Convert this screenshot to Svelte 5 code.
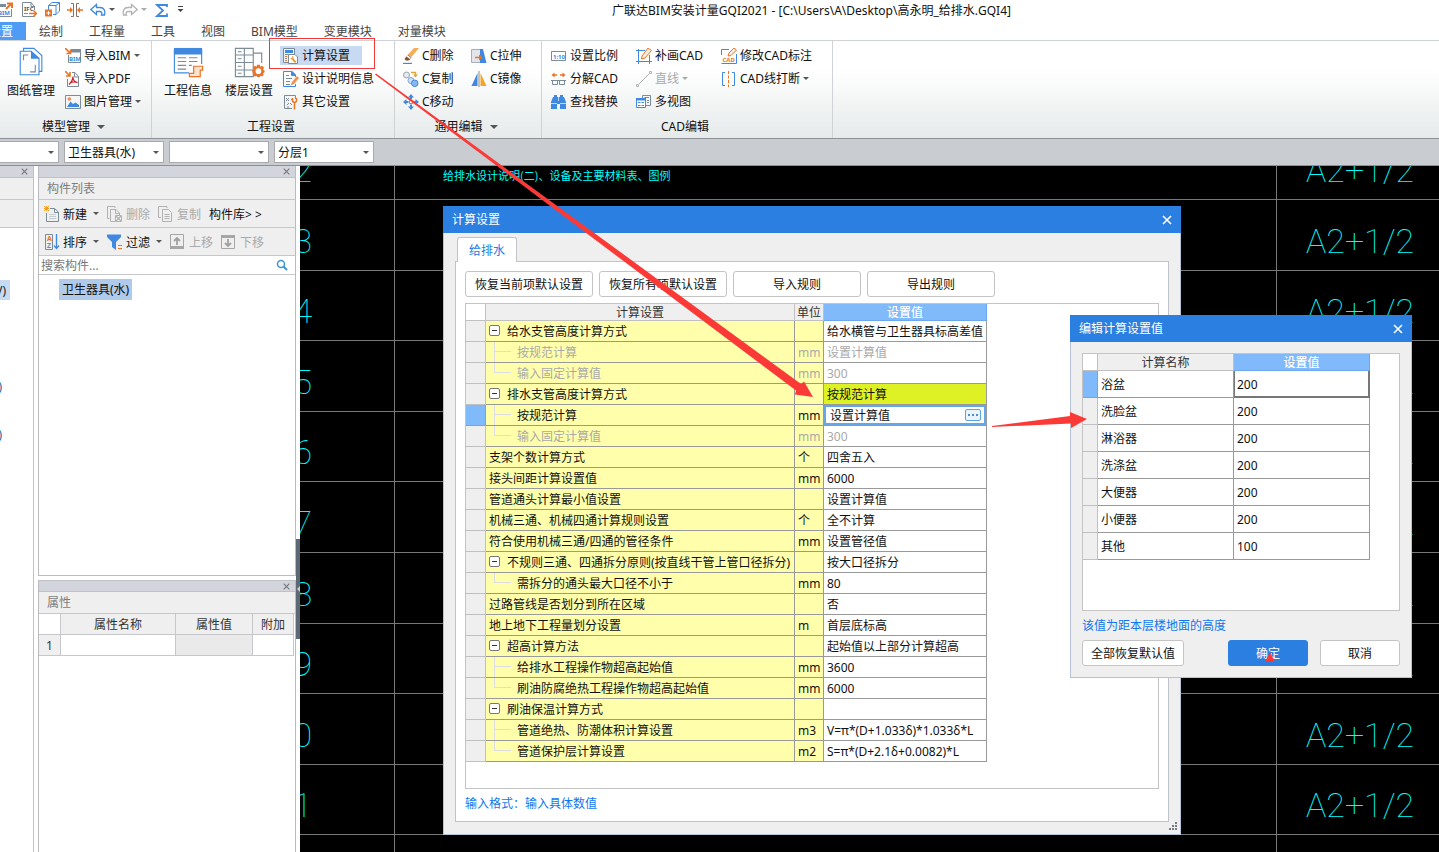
<script lang="ts">
  type Shape = { d?: string; fill?: string; stroke?: string; w?: number; text?: string; x?: number; y?: number; size?: number };

  const BLUE = '#3f8ae0';
  const GRAY = '#7b8b97';
  const ORANGE = '#ea7425';
  const MUTED = '#b2b2b2';

  // small icons live on a 16x16 grid, big ones on 32x32
  const icons: Record<string, Shape[]> = {
    exportBim: [
      { d: 'M0 4.500H8M0 15.500H13.500V8', stroke: GRAY },
      { d: 'M0 3H8V6H0Z', fill: GRAY },
      { text: 'BIM', x: 0, y: 14, size: 6, fill: BLUE },
      { d: 'M8 8L13 3M9 2.500H14V7', stroke: ORANGE, w: 2 }
    ],
    ifc: [
      { d: 'M13.500 9V5.500L10 1.500H1.500V15.500H13.500V14', stroke: GRAY },
      { d: 'M10 1V5.500H14', stroke: GRAY },
      { text: 'IFC', x: 3, y: 10, size: 6, fill: '#555' },
      { d: 'M3 12.500H7', stroke: GRAY },
      { d: 'M8 12.500H15M12.500 9.500L15.500 12.500L12.500 15.500', stroke: ORANGE, w: 1.5 }
    ],
    cube: [
      { d: 'M4.500 4.500L8 1.500H15.500V10L12 13.500M15.500 1.500L12 4.500M4.500 9V4.500H12V13.500H9', stroke: BLUE },
      { d: 'M1 8.500H8V15.500H1Z', fill: ORANGE },
      { d: 'M4.500 10V14M2.500 12H6.500', stroke: '#fff' }
    ],
    spacing: [
      { d: 'M4 2.500H6.500V15.500H4M12 2.500H9.500V15.500H12', stroke: '#8d6f66' },
      { d: 'M0 9H5M16 9H11', stroke: ORANGE, w: 1.5 },
      { d: 'M3 6L6 9L3 12ZM13 6L10 9L13 12Z', fill: ORANGE }
    ],
    undo: [{ d: 'M.8 8.500L6.500 3.500V6.500H10C14 6.500 15.500 9.500 14.500 14H11.500C12.500 11.500 11.500 10.500 9.500 10.500H6.500V13.500Z', stroke: BLUE, w: 1.3 }],
    redo: [{ d: 'M15.200 8.500L9.500 3.500V6.500H6C2 6.500 .5 9.500 1.500 14H4.500C3.500 11.500 4.500 10.500 6.500 10.500H9.500V13.500Z', stroke: MUTED, w: 1.3 }],
    sigma: [{ d: 'M13 6V4H3L9 9.500L3 15H13V12.500', stroke: BLUE, w: 1.8 }],
    importBim: [
      { d: 'M3.500 7V14.500H15.500V2', stroke: GRAY },
      { d: 'M6 1H16V4.500H6Z', fill: GRAY },
      { text: 'BIM', x: 4, y: 12.5, size: 6, fill: BLUE },
      { d: 'M0 0L5 5M5.500 1.500V5.500H1.500', stroke: ORANGE, w: 1.6 }
    ],
    importPdf: [
      { d: 'M2.500 8V15.500H13.500V5.500L10 1.500H7', stroke: GRAY },
      { d: 'M9.500 1V6H14', stroke: GRAY },
      { d: 'M8 5.500C8 9 6 11.500 4 13.500M8 7C8.500 10 10 11 12.500 11.500M5 12C7.500 10.500 9.500 10.500 12.500 11.500', stroke: '#cf2027', w: 1.3 },
      { d: 'M0 0L4.500 4.500M5 1V5H1', stroke: ORANGE, w: 1.6 }
    ],
    picture: [
      { d: 'M.5 1.500H15.500V14.500H.5Z', stroke: GRAY },
      { d: 'M2 13L5.500 7.500L8 10L10.500 8.500L14 11V13Z', fill: BLUE },
      { d: 'M2.500 5A1.800 1.800 0 1 1 6.100 5A1.800 1.800 0 1 1 2.500 5Z', fill: '#f08c55' }
    ],
    calc: [
      { d: 'M.5 .5H11.500V14.500H.5Z', fill: '#eef3fa', stroke: GRAY },
      { d: 'M2 2H10V5H2Z', fill: BLUE },
      { d: 'M2 8.500H4M2 12.500H4', stroke: ORANGE },
      { d: 'M2 10.500H4M2 6.500H7', stroke: GRAY },
      { d: 'M5.500 6.500H12L14.500 9V15.500H5.500Z', fill: '#fff', stroke: GRAY },
      { d: 'M12.800 14.300L9.500 11', stroke: '#e39a2d', w: 1.8 },
      { d: 'M7 10.500L8.500 11.500L10.500 10.500V8.500L9 8L9.500 9.500L8.500 10Z', fill: '#e39a2d' }
    ],
    describe: [
      { d: 'M12.500 6V4L9 .5H.5V15.500H12.500V13M8.500 .5V4.500H12.500', stroke: BLUE },
      { d: 'M9 0V4H13Z', fill: BLUE },
      { d: 'M3 4.500H6M3 7.500H9M3 10.500H7M3 13.500H7', stroke: GRAY },
      { d: 'M14 5L9 11L7.500 14.500L11 13L16 7Z', fill: '#f0924f' }
    ],
    other: [
      { d: 'M12.500 5V1.500H1.500V14.500H9', stroke: GRAY },
      { d: 'M3 4L6 7M6 4L3 7M8 5L10 7M4 11L6 9M7 9L9 11M4 13H6', stroke: GRAY },
      { d: 'M11.500 9V15.500M9.500 4V7Q11.500 10 13.500 7V4', stroke: ORANGE, w: 1.5 }
    ],
    erase: [
      { d: 'M0 15.500H9', stroke: BLUE, w: 1.4 },
      { d: 'M11 0H16L8.500 9L5 6.500Z', fill: '#f2ae58' },
      { d: 'M5 6.500L8.500 9.500L6.500 12Q3 14 1.500 11Z', fill: '#8a552a' },
      { d: 'M4.500 7L8 10L7 11L3.500 8.500Z', fill: '#fff' }
    ],
    stretch: [
      { d: 'M.5 1.500H9.500V14.500H.5Z', fill: '#e3e5ea', stroke: '#a9adb9' },
      { d: 'M9 1H12L15.500 15H9Z', fill: BLUE },
      { d: 'M4 9.500H9', stroke: ORANGE, w: 1.5 },
      { d: 'M8 6.500L11.500 9.500L8 12.500Z', fill: ORANGE }
    ],
    copyShape: [
      { d: 'M.5 4A3 3 0 1 1 6.500 4A3 3 0 1 1 .5 4Z', fill: '#e7e9ee', stroke: '#9ba2ae' },
      { d: 'M8 1.500H12.500V4', stroke: '#e5a825', w: 1.5 },
      { d: 'M10 3.500H15L12.500 6.500Z', fill: '#e5a825' },
      { d: 'M5 9.500A3 3 0 1 1 11 9.500A3 3 0 1 1 5 9.500Z', fill: '#cfe0f4', stroke: '#7fa7d8' },
      { d: 'M8.500 12.300A3.200 3.200 0 1 1 15 12.300A3.200 3.200 0 1 1 8.500 12.300Z', fill: '#8ab8ee', stroke: BLUE }
    ],
    mirror: [
      { d: 'M6.500 2V15H.5Z', fill: BLUE },
      { d: 'M9.500 2V15H15.500Z', fill: '#f0a62c' },
      { d: 'M8 0V16', stroke: '#888' }
    ],
    move: [
      { d: 'M8 0L11 3.500H5ZM8 16L11 12.500H5ZM0 8L3.500 5V11ZM16 8L12.500 5V11Z', fill: BLUE },
      { d: 'M8 3V5.500M8 10.500V13M3 8H5.500M10.500 8H13', stroke: BLUE, w: 2 },
      { d: 'M6.500 6.500H9.500V9.500H6.500Z', fill: '#fff', stroke: ORANGE }
    ],
    scale: [
      { d: 'M.5 3.500H14.500V12.500H.5Z', stroke: GRAY },
      { text: '1:10', x: 2, y: 10.5, size: 6, fill: BLUE }
    ],
    explode: [
      { d: 'M2 4H6M9 4H13', stroke: ORANGE, w: 1.5 },
      { d: 'M3.500 1.500L.5 4L3.500 6.500ZM11.500 1.500L14.500 4L11.500 6.500Z', fill: ORANGE },
      { d: 'M0 9.500H15M1.500 10V13.500H6.500V10M8.500 10V13.500H13.500V10', stroke: GRAY }
    ],
    find: [
      { d: 'M2 3H3V1H6V3H9V1H12V3H13L15 8V15H9V10H6V15H0V8Z', fill: BLUE },
      { d: 'M0 9.500H6M9 9.500H15M7.500 3V7', stroke: '#bcd8f8' }
    ],
    drawCad: [
      { d: 'M2.500 1V16M13.500 7V16M0 13.500H16M0 2.500H9', stroke: BLUE },
      { d: 'M12 0L15.500 2.500L9 10L5.500 11L6 8Z', fill: '#f6ecda', stroke: ORANGE }
    ],
    line: [
      { d: 'M3 13L13 3', stroke: MUTED },
      { d: 'M.5 13.500H2.500V15.500H.5ZM13.500 .5H15.500V2.500H13.500Z', stroke: MUTED }
    ],
    views: [
      { d: 'M6.500 4V1.500H14.500V11.500H10M8.500 3.500H13M11 6.500H13M11 8.500H13', stroke: GRAY },
      { d: 'M.5 4.500H9.500V13.500H.5Z', fill: '#fff', stroke: BLUE },
      { d: 'M0 4H10V6.500H0Z', fill: BLUE },
      { d: 'M2 8.500H4.500M5.500 8.500H8M2 11.500H4.500M5.500 11.500H8', stroke: BLUE }
    ],
    editCad: [
      { d: 'M8 1.500H.5V7M15.500 6V15.500H.5', stroke: BLUE },
      { text: 'CAD', x: 1.5, y: 14, size: 6, fill: ORANGE },
      { d: 'M13 0L15.500 2L10 7.500L7 8L8 5Z', fill: '#f6ecda', stroke: ORANGE }
    ],
    breakLine: [
      { d: 'M4 1.500H1.500V14.500H4M11 1.500H13.500V14.500H11', stroke: BLUE },
      { d: 'M7.500 0V3M7.500 4.500V7.500M7.500 9V12M7.500 13.500V16', stroke: ORANGE }
    ],
    create: [
      { d: 'M6 2.500H10.500L14.500 6V15.500H2.500V7M10.500 2.500V6.500H14.500', stroke: GRAY },
      { d: 'M5 8.500H12M5 10.500H12M5 12.500H12', stroke: '#c5cdd3' },
      { d: 'M0 0L5 5M0 5L5 0M2.500 0V5M0 2.500H5', stroke: '#f0a030' }
    ],
    remove: [
      { d: 'M2.500 12.500H.5V.5H8V2M3.500 15.500V3.500H9L12.500 7V15.500ZM8.500 3.500V7.500H12.500', stroke: MUTED },
      { d: 'M8.500 9.500H14.500V15.500H8.500Z', fill: '#fff', stroke: MUTED },
      { d: 'M9 10L14 15M14 10L9 15', stroke: MUTED, w: 1.5 }
    ],
    copy: [
      { d: 'M3 11.500H.5V.5H9V2M4.500 3.500H10.500L13.500 6.500V15.500H4.500Z', stroke: MUTED },
      { d: 'M6.500 8.500H11.500M6.500 10.500H11.500M6.500 12.500H11.500', stroke: MUTED }
    ],
    sort: [
      { d: 'M1.500 .5H8.500V15.500H1.500Z', stroke: GRAY },
      { text: 'A', x: 3, y: 7, size: 7, fill: ORANGE },
      { text: 'Z', x: 3, y: 14, size: 7, fill: GRAY },
      { d: 'M12.500 0V14M10 11.500L12.500 14.500L15 11.500', stroke: BLUE, w: 1.3 }
    ],
    filter: [
      { d: 'M0 .5H14V3L9 8V16L5 13V8L0 3Z', fill: BLUE },
      { d: 'M11 11.500H15M11 14.500H15', stroke: ORANGE }
    ],
    up: [
      { d: 'M.5 .5H13.500V14.500H.5Z', stroke: '#a6a6a6' },
      { d: 'M0 12H14V15H0Z', fill: '#a6a6a6' },
      { d: 'M7 11V4M4 7L7 4L10 7', stroke: '#a0a0a0', w: 1.8 }
    ],
    down: [
      { d: 'M.5 1.500H13.500V14.500H.5Z', stroke: '#a6a6a6' },
      { d: 'M0 1H14V4H0Z', fill: '#a6a6a6' },
      { d: 'M7 5V12M4 9L7 12L10 9', stroke: '#a0a0a0', w: 1.8 }
    ],
    drawing: [
      { d: 'M8 4V1.500H19L27.500 9V26H25M4.500 4.500H16L24.500 12V29.500H4.500Z', stroke: BLUE, w: 1.2 },
      { d: 'M16 4V12.500H25Z', fill: BLUE },
      { d: 'M8 14V8.500H13M20.500 19V26.500H15', stroke: GRAY, w: 1.2 }
    ],
    projectInfo: [
      { d: 'M1.500 3V27.500H17M30.500 3V18', stroke: BLUE, w: 1.2 },
      { d: 'M1 1H31V8H1Z', fill: BLUE },
      { d: 'M5 11.500H14M5 15.500H14M5 19.500H14M5 23.500H14M17 11.500H26M17 15.500H26M17 19.500H20', stroke: GRAY, w: 1.2 },
      { d: 'M22 20.500H31.500V24.500H29V31.500H17.500V28H22Z', fill: '#fbe3d0', stroke: ORANGE, w: 1.3 }
    ],
    floors: [
      { d: 'M1.500 1.500H20.500V31.500H1.500ZM11 1.500V31.500M1.500 8.500H20.500M1.500 16.500H20.500M1.500 24.500H20.500M20.500 6.500H29.500V17M4 5H8M4 12.500H8M4 20.500H8M4 28H8', stroke: GRAY, w: 1.2 },
      { d: 'M24.500 19H27.500L28 21L30 20L32 22L31 24L32.500 25V27L31 28L31.500 30L29.500 31.500L28 30.500L27.500 32H24.500L24 30.500L22 31.500L20 29.500L21 28L19.500 27V24.500L21 24L20 22L22 20L24 21Z', fill: ORANGE },
      { d: 'M23 25.700A3 3 0 1 1 29 25.700A3 3 0 1 1 23 25.700Z', fill: '#fff' }
    ]
  };

  const tabs = ['绘制', '工程量', '工具', '视图', 'BIM模型', '变更模块', '对量模块'];

  const groups = [
    {
      key: 'model', title: '模型管理', menu: true,
      big: [{ label: '图纸管理', icon: 'drawing' }],
      small: [
        { label: '导入BIM', icon: 'importBim', menu: true },
        { label: '导入PDF', icon: 'importPdf' },
        { label: '图片管理', icon: 'picture', menu: true }
      ]
    },
    {
      key: 'project', title: '工程设置',
      big: [{ label: '工程信息', icon: 'projectInfo' }, { label: '楼层设置', icon: 'floors' }],
      small: [
        { label: '计算设置', icon: 'calc', active: true },
        { label: '设计说明信息', icon: 'describe' },
        { label: '其它设置', icon: 'other' }
      ]
    },
    {
      key: 'edit', title: '通用编辑', menu: true,
      big: [],
      small: [
        { label: 'C删除', icon: 'erase' },
        { label: 'C复制', icon: 'copyShape' },
        { label: 'C移动', icon: 'move' },
        { label: 'C拉伸', icon: 'stretch' },
        { label: 'C镜像', icon: 'mirror' }
      ]
    },
    {
      key: 'cad', title: 'CAD编辑',
      big: [],
      small: [
        { label: '设置比例', icon: 'scale' },
        { label: '分解CAD', icon: 'explode' },
        { label: '查找替换', icon: 'find' },
        { label: '补画CAD', icon: 'drawCad' },
        { label: '直线', icon: 'line', menu: true, disabled: true },
        { label: '多视图', icon: 'views' },
        { label: '修改CAD标注', icon: 'editCad' },
        { label: 'CAD线打断', icon: 'breakLine', menu: true }
      ]
    }
  ] as any[];

  const combos = [
    { label: '专业', value: '' },
    { label: '构件类型', value: '卫生器具(水)' },
    { label: '构件', value: '' },
    { label: '分层', value: '分层1' }
  ];

  const toolRows = [
    [
      { label: '新建', icon: 'create', menu: true },
      { label: '删除', icon: 'remove', disabled: true },
      { label: '复制', icon: 'copy', disabled: true },
      { label: '构件库> >' }
    ],
    [
      { label: '排序', icon: 'sort', menu: true },
      { label: '过滤', icon: 'filter', menu: true },
      { label: '上移', icon: 'up', disabled: true },
      { label: '下移', icon: 'down', disabled: true }
    ]
  ] as any[][];

  const rules = [
    { kind: 'parent', name: '给水支管高度计算方式', unit: '', value: '给水横管与卫生器具标高差值' },
    { kind: 'child', name: '按规范计算', unit: 'mm', value: '设置计算值', dim: true },
    { kind: 'child last', name: '输入固定计算值', unit: 'mm', value: '300', dim: true },
    { kind: 'parent', name: '排水支管高度计算方式', unit: '', value: '按规范计算', marked: true },
    { kind: 'child', name: '按规范计算', unit: 'mm', value: '设置计算值', current: true },
    { kind: 'child last', name: '输入固定计算值', unit: 'mm', value: '300', dim: true },
    { kind: 'plain', name: '支架个数计算方式', unit: '个', value: '四舍五入' },
    { kind: 'plain', name: '接头间距计算设置值', unit: 'mm', value: '6000' },
    { kind: 'plain', name: '管道通头计算最小值设置', unit: '', value: '设置计算值' },
    { kind: 'plain', name: '机械三通、机械四通计算规则设置', unit: '个', value: '全不计算' },
    { kind: 'plain', name: '符合使用机械三通/四通的管径条件', unit: 'mm', value: '设置管径值' },
    { kind: 'parent', name: '不规则三通、四通拆分原则(按直线干管上管口径拆分)', unit: '', value: '按大口径拆分' },
    { kind: 'child last', name: '需拆分的通头最大口径不小于', unit: 'mm', value: '80' },
    { kind: 'plain', name: '过路管线是否划分到所在区域', unit: '', value: '否' },
    { kind: 'plain', name: '地上地下工程量划分设置', unit: 'm', value: '首层底标高' },
    { kind: 'parent', name: '超高计算方法', unit: '', value: '起始值以上部分计算超高' },
    { kind: 'child', name: '给排水工程操作物超高起始值', unit: 'mm', value: '3600' },
    { kind: 'child last', name: '刷油防腐绝热工程操作物超高起始值', unit: 'mm', value: '6000' },
    { kind: 'parent', name: '刷油保温计算方式', unit: '', value: '' },
    { kind: 'child', name: '管道绝热、防潮体积计算设置', unit: 'm3', value: 'V=π*(D+1.033δ)*1.033δ*L' },
    { kind: 'child last', name: '管道保护层计算设置', unit: 'm2', value: 'S=π*(D+2.1δ+0.0082)*L' }
  ] as any[];

  const fixtures = [
    ['浴盆', '200'],
    ['洗脸盆', '200'],
    ['淋浴器', '200'],
    ['洗涤盆', '200'],
    ['大便器', '200'],
    ['小便器', '200'],
    ['其他', '100']
  ];

  // sheet list drawn on the CAD canvas, ten rows over 706 px
  const sheets = ['2', '3', '4', '5', '6', '7', '8', '9', '0', '1'];
  const sheetY = (i: number) => Math.round(i * 70.6);
</script>

{#snippet icon(name: string, size = 16, grid = 16)}
  <svg class="icon" width={size} height={size} viewBox="0 0 {grid} {grid}" aria-hidden="true">
    {#each icons[name] as s}
      {#if s.text}
        <text x={s.x} y={s.y} font-size={s.size} fill={s.fill} font-weight="700">{s.text}</text>
      {:else}
        <path d={s.d} fill={s.fill ?? 'none'} stroke={s.stroke ?? 'none'} stroke-width={s.w ?? 1} />
      {/if}
    {/each}
  </svg>
{/snippet}

{#snippet caret()}
  <svg class="caret" width="6" height="3" viewBox="0 0 6 3" aria-hidden="true"><path d="M0 0H6L3 3Z" fill="currentColor" /></svg>
{/snippet}

{#snippet cross(size: number)}
  <svg width={size} height={size} viewBox="0 0 10 10" aria-hidden="true">
    <path d="M1 1L9 9M9 1L1 9" stroke="currentColor" stroke-width="1.6" fill="none" />
  </svg>
{/snippet}

<div class="app">
  <header class="titlebar">
    <div class="quick">
      <button aria-label="导出BIM">{@render icon('exportBim')}</button>
      <button aria-label="导出IFC">{@render icon('ifc')}</button>
      <button aria-label="三维">{@render icon('cube')}</button>
      <button aria-label="间距">{@render icon('spacing')}</button>
      <button aria-label="撤销">{@render icon('undo')}{@render caret()}</button>
      <button class="off" aria-label="恢复">{@render icon('redo')}{@render caret()}</button>
      <button aria-label="汇总">{@render icon('sigma')}</button>
      <button aria-label="更多">
        <svg width="7" height="8" viewBox="0 0 7 8"><path d="M1 1.500H6" stroke="#444" /><path d="M.5 4H6.500L3.500 7Z" fill="#444" /></svg>
      </button>
    </div>
    <h1>广联达BIM安装计量GQI2021 - [C:\Users\A\Desktop\高永明_给排水.GQI4]</h1>
  </header>

  <nav class="tabs">
    <button class="active">设置</button>
    {#each tabs as tab}
      <button>{tab}</button>
    {/each}
  </nav>

  <div class="ribbon">
    {#each groups as group}
      <section class="group {group.key}">
        <div class="tools">
          {#each group.big as item}
            <button class="big">{@render icon(item.icon, 31, 33)}{item.label}</button>
          {/each}
          <div class="small-grid">
            {#each group.small as item}
              <button class="small" class:active={item.active} disabled={item.disabled}>
                {@render icon(item.icon)}{item.label}{#if item.menu}{@render caret()}{/if}
              </button>
            {/each}
          </div>
        </div>
        <div class="caption">{group.title}{#if group.menu}{@render caret()}{/if}</div>
      </section>
    {/each}
  </div>

  <div class="combos">
    {#each combos as combo}
      <span class="combo">
        <select aria-label={combo.label}><option>{combo.value}</option></select>
        {@render caret()}
      </span>
    {/each}
  </div>

  <main>
    <aside class="nav-panel">
      <div class="strip"><button aria-label="关闭">{@render cross(7)}</button></div>
      <div class="block"></div>
      <div class="block tall"></div>
      <ul>
        <li class="selected">V)</li>
        <li>)</li>
        <li>)</li>
      </ul>
    </aside>

    <div class="side">
      <section class="panel list">
        <div class="strip"><button aria-label="关闭">{@render cross(7)}</button></div>
        <h2>构件列表</h2>
        {#each toolRows as row}
          <div class="toolbar">
            {#each row as item}
              <button disabled={item.disabled}>
                {#if item.icon}{@render icon(item.icon)}{/if}<span>{item.label}</span>{#if item.menu}{@render caret()}{/if}
              </button>
            {/each}
          </div>
        {/each}
        <div class="search">
          <input aria-label="搜索构件" placeholder="搜索构件..." />
          <svg width="12" height="12" viewBox="0 0 12 12"><circle cx="5" cy="5" r="3.500" fill="none" stroke="#3d95d0" stroke-width="1.500" /><path d="M7.500 7.500L11 11" stroke="#3d95d0" stroke-width="2" /></svg>
        </div>
        <div class="tree"><span>卫生器具(水)</span></div>
      </section>

      <section class="panel props">
        <div class="strip"><button aria-label="关闭">{@render cross(7)}</button></div>
        <h2>属性</h2>
        <table>
          <thead>
            <tr><th class="num"></th><th>属性名称</th><th class="val">属性值</th><th class="add">附加</th></tr>
          </thead>
          <tbody>
            <tr><th class="num">1</th><td></td><td class="locked"></td><td></td></tr>
          </tbody>
        </table>
      </section>
    </div>

    <div class="splitter">
      <button aria-label="收起"><svg width="4" height="8" viewBox="0 0 4 8"><path d="M4 1V7L1 4Z" fill="#c9cdd3" /></svg></button>
    </div>

    <div class="canvas">
      <svg class="sheet" width="100%" height="100%">
        <line x1="94.500" y1="0" x2="94.500" y2="100%" />
        <line x1="976.500" y1="0" x2="976.500" y2="100%" />
        {#each sheets as digit, i}
          <line x1="0" y1={sheetY(i) + 33.5} x2="100%" y2={sheetY(i) + 33.5} />
          <text class="cad" x="12" y={sheetY(i) + 16} text-anchor="end">{digit}</text>
          <text class="cad" x="1006" y={sheetY(i) + 16}>A2+1/2</text>
        {/each}
        <text class="cad-title" x="143" y="14">给排水设计说明(二)、设备及主要材料表、图例</text>
      </svg>

      <div class="dialog rules" role="dialog" aria-label="计算设置">
        <div class="dialog-head">计算设置<button aria-label="关闭">{@render cross(10)}</button></div>
        <div class="dialog-tabs"><button>给排水</button></div>
        <div class="page">
          <div class="actions">
            <button>恢复当前项默认设置</button>
            <button>恢复所有项默认设置</button>
            <button>导入规则</button>
            <button>导出规则</button>
          </div>
          <div class="grid-box">
            <table class="grid">
              <colgroup><col class="c-head" /><col class="c-name" /><col class="c-unit" /><col class="c-value" /></colgroup>
              <thead>
                <tr><th class="corner"></th><th>计算设置</th><th>单位</th><th class="picked">设置值</th></tr>
              </thead>
              <tbody>
                {#each rules as rule}
                  <tr class:dim={rule.dim} class:current={rule.current}>
                    <td class="rowhead"></td>
                    <td class="name {rule.kind}">
                      {#if rule.kind === 'parent'}<button class="toggle" aria-label="折叠"></button>{/if}{rule.name}
                    </td>
                    <td class="unit">{rule.unit}</td>
                    {#if rule.current}
                      <td class="editing">
                        <div class="editor">
                          <input aria-label={rule.name} value={rule.value} />
                          <button aria-label="编辑"><i></i><i></i><i></i></button>
                        </div>
                      </td>
                    {:else}
                      <td class="value" class:marked={rule.marked}>{rule.value}</td>
                    {/if}
                  </tr>
                {/each}
              </tbody>
            </table>
          </div>
          <p class="hint">输入格式：输入具体数值</p>
        </div>
        <svg class="grip" width="9" height="9" viewBox="0 0 9 9">
          <path d="M6 0H8V2H6ZM3 3H5V5H3ZM6 3H8V5H6ZM0 6H2V8H0ZM3 6H5V8H3ZM6 6H8V8H6Z" fill="#777b84" />
        </svg>
      </div>

      <div class="dialog values" role="dialog" aria-label="编辑计算设置值">
        <div class="dialog-head">编辑计算设置值<button aria-label="关闭">{@render cross(10)}</button></div>
        <div class="values-body">
          <div class="grid-box">
            <table class="grid">
              <colgroup><col class="c-slim" /><col class="c-half" /><col class="c-half" /></colgroup>
              <thead>
                <tr><th class="corner"></th><th>计算名称</th><th class="picked">设置值</th></tr>
              </thead>
              <tbody>
                {#each fixtures as [name, value], i}
                  <tr class:current={i === 0}>
                    <td class="rowhead"></td>
                    <td class="value">{name}</td>
                    <td class="value" class:focused={i === 0}>{value}</td>
                  </tr>
                {/each}
              </tbody>
            </table>
          </div>
          <p class="hint">该值为距本层楼地面的高度</p>
          <div class="footer">
            <button class="reset">全部恢复默认值</button>
            <button class="primary">确定</button>
            <button>取消</button>
          </div>
        </div>
      </div>
    </div>
  </main>

  <svg class="marks" width="1439" height="852" viewBox="0 0 1439 852" aria-hidden="true">
    <rect x="269.500" y="38.500" width="105" height="30" fill="none" stroke="#f2383a" />
    <g fill="#fb3a37">
      <path d="M376 73.500L801 384L804 381.500L813 397L795 394.500L796 390.500L375 74.500Z" />
      <path d="M992 426L1070 416V412L1087 419L1071 428V423.500L992 427Z" />
      <path d="M1270 652L1274.500 661H1265.500Z" />
    </g>
  </svg>
</div>

<style>
  :global(body) {
    margin: 0;
    overflow: hidden;
  }

  .app {
    position: relative;
    display: flex;
    flex-direction: column;
    height: 100vh;
    overflow: hidden;
    background: #fff;
    color: #111;
    font: 12px/18px "Noto Sans", "Noto Sans CJK SC", sans-serif;
  }

  button,
  input,
  select {
    font: inherit;
    color: inherit;
    margin: 0;
    padding: 0;
    border: 0;
    background: none;
    white-space: nowrap;
  }

  h1,
  h2,
  p,
  ul {
    margin: 0;
    padding: 0;
    font-size: 12px;
    font-weight: 400;
    list-style: none;
  }

  svg {
    flex: none;
    display: block;
  }

  .caret {
    color: #555;
  }

  /* title bar and ribbon */
  .titlebar {
    display: flex;
    align-items: center;
    height: 22px;
    flex: none;
  }

  .quick {
    display: flex;
    align-items: center;
    gap: 7px;
    padding-bottom: 4px;
    margin-left: -2px;
  }

  .quick button {
    display: flex;
    align-items: center;
    gap: 3px;
  }

  .quick .off .caret {
    color: #aaa;
  }

  h1 {
    flex: 1;
    text-align: center;
  }

  .tabs {
    display: flex;
    height: 18px;
    flex: none;
    border-bottom: 1px solid #d0d3d6;
    color: #444;
  }

  .tabs button {
    padding: 1px 13px 0;
  }

  .tabs .active {
    display: flex;
    justify-content: flex-end;
    width: 26px;
    overflow: hidden;
    background: #4f9cf5;
    color: #fff;
  }

  .ribbon {
    display: flex;
    height: 97px;
    flex: none;
    background: linear-gradient(#fff 30%, #e6eaea);
    border-bottom: 1px solid #8d9296;
  }

  .group {
    box-sizing: border-box;
    padding-top: 3px;
    border-right: 1px solid #d0d3d5;
  }

  .model { width: 152px; }
  .project { width: 243px; }
  .edit { width: 147px; }
  .cad { width: 291px; }

  .tools {
    display: flex;
    height: 69px;
  }

  .model .tools { padding-left: 7px; gap: 7px; }
  .project .tools { padding-left: 12px; }
  .edit .tools { padding-left: 5px; }
  .cad .tools { padding-left: 6px; }

  .project .big {
    margin-right: 13px;
  }

  .project .big + .big {
    margin-right: 7px;
  }

  .big {
    display: flex;
    flex-direction: column;
    align-items: center;
    width: 48px;
    padding-top: 3px;
    gap: 4px;
  }

  .small-grid {
    display: grid;
    grid-auto-flow: column;
    grid-template-rows: repeat(3, 23px);
    align-items: center;
    justify-items: start;
  }

  .edit .small-grid { grid-auto-columns: 68px; }
  .cad .small-grid { grid-auto-columns: 85px; }

  .small {
    display: flex;
    align-items: center;
    gap: 3px;
    height: 19px;
    padding: 0 3px;
  }

  .small.active {
    padding-right: 12px;
    background: #c8d9f2;
  }

  .small:disabled,
  .small:disabled .caret {
    color: #a9a9a9;
  }

  .caption {
    display: flex;
    align-items: center;
    justify-content: center;
    gap: 7px;
    height: 27px;
    padding-right: 4px;
  }

  .caption .caret {
    width: 8px;
    height: 4px;
  }

  .combos {
    display: flex;
    align-items: center;
    gap: 5px;
    height: 26px;
    flex: none;
    background: #c9ccd1;
    border-bottom: 1px solid #8d9094;
  }

  .combo {
    position: relative;
    width: 100px;
  }

  .combo:first-child {
    width: 59px;
  }

  .combo select {
    box-sizing: border-box;
    display: block;
    appearance: none;
    width: 100%;
    height: 22px;
    padding: 2px 0 0 3px;
    border: 1px solid #a7a9ad;
    background: #fff;
  }

  .combo:first-child select {
    border-left: 0;
  }

  .combo .caret {
    position: absolute;
    right: 5px;
    top: 10px;
  }

  /* docked panels */
  main {
    display: flex;
    flex: 1;
    min-height: 0;
  }

  .nav-panel {
    width: 33px;
    flex: none;
    border-right: 1px solid #bfc1c6;
  }

  .strip {
    display: flex;
    align-items: center;
    justify-content: flex-end;
    height: 11px;
    padding-right: 5px;
    background: #d3d5dc;
    border-bottom: 1px solid #bfc1c6;
    color: #777;
  }

  .block {
    height: 21px;
    background: #efefef;
    border-bottom: 1px solid #c5c7cb;
  }

  .block.tall {
    height: 27px;
  }

  .nav-panel ul {
    padding-top: 52px;
  }

  .nav-panel li {
    display: flex;
    justify-content: flex-end;
    box-sizing: border-box;
    width: 10px;
    height: 20px;
    margin-bottom: 76px;
    padding-right: 4px;
    line-height: 22px;
    color: #2a5f9e;
  }

  .nav-panel li + li {
    width: 6px;
    margin-bottom: 28px;
  }

  .nav-panel .selected {
    background: #c8d9f2;
    color: #222;
  }

  .side {
    display: flex;
    flex-direction: column;
    gap: 4px;
    width: 258px;
    margin-left: 4px;
    flex: none;
  }

  .panel {
    box-sizing: border-box;
    border: 1px solid #b9bbc0;
    border-top: 0;
  }

  .list {
    display: flex;
    flex-direction: column;
    flex: 3 1 0;
    min-height: 410px;
  }

  .props {
    flex: 2 1 0;
    border-top: 1px solid #bfc1c6;
    border-bottom: 0;
  }

  .props .strip {
    height: 10px;
  }

  .panel h2 {
    height: 21px;
    line-height: 21px;
    padding-left: 8px;
    background: #efefef;
    border-bottom: 1px solid #c5c7cb;
    color: #7d7d7d;
  }

  .toolbar {
    display: flex;
    align-items: center;
    gap: 8px;
    height: 27px;
    padding-left: 5px;
    background: #efefef;
    border-bottom: 1px solid #c5c7cb;
  }

  .toolbar button {
    display: flex;
    align-items: center;
    gap: 3px;
  }

  .toolbar span {
    padding-top: 2px;
  }

  .toolbar .caret {
    margin-left: 3px;
  }

  .toolbar button:disabled {
    color: #aaa;
  }

  .search {
    display: flex;
    align-items: center;
    height: 18px;
    padding: 0 7px 0 2px;
    border-bottom: 1px solid #c5c7cb;
  }

  .search input {
    flex: 1;
    min-width: 0;
    padding-top: 2px;
    outline: none;
  }

  .search input::placeholder {
    color: #777;
    opacity: 1;
  }

  .tree {
    padding: 4px 20px;
  }

  .tree span {
    display: inline-block;
    height: 21px;
    line-height: 21px;
    padding: 0 3px;
    background: #b0caec;
  }

  .props table {
    width: 255px;
    border-spacing: 0;
    table-layout: fixed;
  }

  .props th,
  .props td {
    box-sizing: border-box;
    height: 21px;
    padding: 1px 0 0;
    border-right: 1px solid #c5c7cb;
    border-bottom: 1px solid #c5c7cb;
    background: #efefef;
    font-weight: 400;
    color: #333;
  }

  .props td,
  .props thead .num {
    background: #fff;
  }

  .props td.locked {
    background: #eaeaea;
  }

  .props .num { width: 22px; }
  .props .val { width: 77px; }
  .props .add { width: 41px; }

  .splitter {
    display: flex;
    align-items: center;
    width: 4px;
    padding-top: 160px;
    flex: none;
  }

  .splitter button {
    display: flex;
    align-items: center;
    width: 4px;
    height: 100px;
    background: #5d6875;
  }

  /* CAD canvas */
  .canvas {
    position: relative;
    flex: 1;
    min-width: 0;
    overflow: hidden;
    background: #000;
  }

  .sheet {
    position: absolute;
    inset: 0;
  }

  .sheet line {
    stroke: #787878;
  }

  .sheet text {
    fill: #00ffff;
  }

  text.cad {
    font: 100 34px Roboto, sans-serif;
  }

  text.cad-title {
    font: 11px "Noto Sans CJK SC", sans-serif;
  }

  .dialog {
    position: absolute;
    box-sizing: border-box;
    background: #efefef;
    border: 1px solid #b5c3d6;
    border-top: 0;
  }

  .rules {
    left: 143px;
    top: 40px;
    width: 738px;
  }

  .values {
    left: 770px;
    top: 149px;
    width: 342px;
  }

  .dialog-head {
    display: flex;
    align-items: center;
    justify-content: space-between;
    height: 27px;
    margin: 0 -1px;
    padding: 0 9px;
    background: #2b7fe1;
    color: #fff;
  }

  .dialog-tabs {
    padding: 4px 13px 0;
  }

  .dialog-tabs button {
    position: relative;
    display: block;
    box-sizing: border-box;
    width: 60px;
    height: 25px;
    margin-bottom: -1px;
    padding-top: 2px;
    border: 1px solid #c0c3c9;
    border-bottom: 0;
    border-radius: 3px 3px 0 0;
    background: #fff;
    color: #1f7be4;
  }

  .page {
    margin: 0 11px 12px;
    padding: 9px 9px 8px;
    border: 1px solid #c0c3c9;
    background: #fff;
  }

  .actions {
    display: flex;
    gap: 6px;
  }

  .actions button,
  .footer button {
    box-sizing: border-box;
    width: 128px;
    height: 26px;
    padding-top: 2px;
    border: 1px solid #c4c4c4;
    border-radius: 3px;
    background: #fff;
  }

  .grid-box {
    border: 1px solid #c4c4c4;
    background: #fff;
  }

  .rules .grid-box {
    margin-top: 6px;
    padding-bottom: 26px;
  }

  .grid {
    width: 521px;
    border-spacing: 0;
    table-layout: fixed;
  }

  .values .grid {
    width: 287px;
  }

  .c-head { width: 20px; }
  .c-name { width: 309px; }
  .c-unit { width: 29px; }
  .c-value { width: 163px; }
  .c-slim { width: 15px; }
  .c-half { width: 136px; }

  .grid th,
  .grid td {
    box-sizing: border-box;
    height: 21px;
    padding: 2px 0 0 3px;
    border-right: 1px solid #999;
    border-bottom: 1px solid #999;
    line-height: 18px;
    white-space: nowrap;
    overflow: hidden;
  }

  .values .grid td {
    height: 27px;
  }

  .grid th {
    height: 17px;
    padding: 2px 0 0;
    border-color: #c0c0c0;
    background: #efefef;
    font-weight: 400;
    line-height: 14px;
    color: #333;
  }

  .grid th.corner {
    background: #fff;
  }

  .grid th.picked {
    background: #80bafa;
    border-color: #6aa7ec;
    color: #fff;
    font-weight: 500;
  }

  .grid td.rowhead {
    background: #efefef;
    border-color: #c0c0c0;
  }

  .grid .current .rowhead {
    background: #80bafa;
    border-color: #6aa7ec;
  }

  .grid td.name,
  .grid td.unit {
    background: #ffffab;
  }

  .grid td.name {
    position: relative;
  }

  .grid td.child {
    padding-left: 31px;
  }

  .child::before,
  .child::after {
    content: "";
    position: absolute;
    left: 8px;
    top: 0;
    height: 9px;
    border-left: 1px solid #dcdce4;
  }

  .child::before {
    width: 16px;
    border-bottom: 1px solid #dcdce4;
  }

  .child:not(.last)::after {
    height: 20px;
  }

  .dim td {
    color: #a9a9a9;
  }

  .grid td.marked {
    background: #def125;
  }

  .toggle {
    position: relative;
    box-sizing: border-box;
    width: 11px;
    height: 11px;
    margin-right: 7px;
    border: 1px solid #777;
    border-radius: 2px;
    background: #fff;
    vertical-align: 1px;
    line-height: 9px;
  }

  .toggle::before {
    content: "";
    position: absolute;
    left: 2px;
    right: 2px;
    top: 4px;
    border-top: 1px solid #333;
  }

  .grid td.editing {
    padding: 0;
  }

  .editor {
    box-sizing: border-box;
    display: flex;
    align-items: center;
    height: 20px;
    padding: 0 3px 0 4px;
    border: 2px solid #64a6ea;
    background: #fff;
  }

  .editor input {
    flex: 1;
    min-width: 0;
    height: 16px;
    padding-top: 2px;
    box-sizing: border-box;
    outline: none;
  }

  .editor button {
    display: flex;
    align-items: center;
    justify-content: center;
    gap: 2px;
    box-sizing: border-box;
    width: 16px;
    height: 12px;
    border: 1px solid #5ba3e2;
    border-radius: 2px;
    background: #eaf4fc;
  }

  .editor i {
    width: 2px;
    height: 2px;
    background: #4a8fce;
  }

  .grid td.focused {
    box-shadow: inset 1px 0 #777, inset -1px -1px #777;
    border-color: #777;
  }

  .hint {
    margin-top: 6px;
    color: #1077f0;
  }

  .grip {
    position: absolute;
    right: 2px;
    bottom: 3px;
  }

  .values-body {
    padding: 11px;
  }

  .values .grid-box {
    padding-bottom: 50px;
  }

  .footer {
    display: flex;
    gap: 12px;
    margin-top: 5px;
  }

  .footer button {
    width: 80px;
  }

  .footer .reset {
    width: 102px;
    margin-right: auto;
  }

  .footer .primary {
    background: #2b7fe1;
    border-color: #2b7fe1;
    color: #fff;
  }

  .marks {
    position: absolute;
    left: 0;
    top: 0;
    pointer-events: none;
  }
</style>
